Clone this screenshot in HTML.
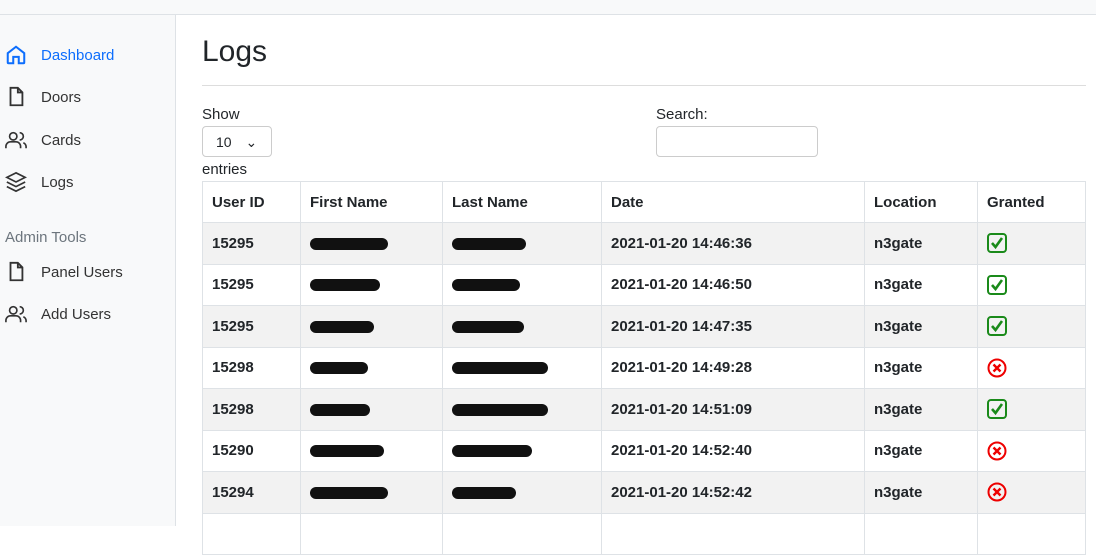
<!DOCTYPE html>
<html><head><style>
body{margin:0;width:1096px;height:526px;overflow:hidden;font-family:"Liberation Sans",sans-serif;background:#fff;color:#212529;position:relative}
.top{position:absolute;left:0;top:0;width:1096px;height:14px;background:#f8f9fa;border-bottom:1px solid #dee2e6}
.side{position:absolute;left:0;top:15px;width:175px;height:511px;background:#f8f9fa;border-right:1px solid #dee2e6}
.nav{position:absolute;left:5px;font-size:15px;color:#333;display:flex;align-items:center}
.nav svg{width:22px;height:22px;margin-right:14px}
.nav.a{color:#0d6efd}
h1{position:absolute;left:202px;top:35px;margin:0;font-weight:400;font-size:30px}
.hr{position:absolute;left:202px;top:85px;width:884px;border-top:1px solid #ddd}
.t{position:absolute;font-size:15px}
table{position:absolute;left:202px;top:181px;border-collapse:collapse;width:884px;font-size:15px;font-weight:bold}
td{border:1px solid #dee2e6;height:41.5px;padding:0 0 0 9px;box-sizing:border-box}
tr:first-child td{height:41px}
tr:nth-child(even) td{background:#f2f2f2}
.s{display:inline-block;background:#111;border-radius:10px;height:12px;vertical-align:middle}
svg.i{width:20px;height:20px;vertical-align:middle}
</style></head><body>
<div class="top"></div>
<div class="side">
<div class="nav a" style="top:29px"><svg viewBox="0 0 24 24" fill="none" stroke="#0d6efd" stroke-width="2.2"><path d="M3 10 12 3l9 7v10a1 1 0 0 1-1 1h-5v-7H9v7H4a1 1 0 0 1-1-1z"/></svg>Dashboard</div>
<div class="nav" style="top:71px"><svg viewBox="0 0 24 24" fill="none" stroke="#333" stroke-width="2"><path d="M6 2h8l5 5v14H6zM14 2v5h5"/></svg>Doors</div>
<div class="nav" style="top:114px"><svg viewBox="0 0 24 24" fill="none" stroke="#333" stroke-width="1.8"><circle cx="9" cy="8" r="4"/><path d="M1 21v-2a5 5 0 0 1 5-5h6a5 5 0 0 1 5 5v2M16 4a4 4 0 0 1 0 8M23 21v-2a5 5 0 0 0-3-4"/></svg>Cards</div>
<div class="nav" style="top:156px"><svg viewBox="0 0 24 24" fill="none" stroke="#333" stroke-width="1.8"><path d="M12 2 2 7l10 5 10-5zM2 17l10 5 10-5M2 12l10 5 10-5"/></svg>Logs</div>
<div style="position:absolute;left:5px;top:214px;font-size:15px;color:#6c757d">Admin Tools</div>
<div class="nav" style="top:246px"><svg viewBox="0 0 24 24" fill="none" stroke="#333" stroke-width="2"><path d="M6 2h8l5 5v14H6zM14 2v5h5"/></svg>Panel Users</div>
<div class="nav" style="top:288px"><svg viewBox="0 0 24 24" fill="none" stroke="#333" stroke-width="1.8"><circle cx="9" cy="8" r="4"/><path d="M1 21v-2a5 5 0 0 1 5-5h6a5 5 0 0 1 5 5v2M16 4a4 4 0 0 1 0 8M23 21v-2a5 5 0 0 0-3-4"/></svg>Add Users</div>
</div>
<h1>Logs</h1>
<div class="hr"></div>
<div class="t" style="left:202px;top:106px">Show</div>
<div style="position:absolute;left:202px;top:126px;width:70px;height:31px;border:1px solid #ccc;border-radius:4px;font-size:14px;line-height:31px;padding-left:13px;box-sizing:border-box">10 <span style="margin-left:10px">&#8964;</span></div>
<div class="t" style="left:202px;top:161px">entries</div>
<div class="t" style="left:656px;top:106px">Search:</div>
<div style="position:absolute;left:656px;top:126px;width:162px;height:31px;border:1px solid #ccc;border-radius:4px;box-sizing:border-box"></div>
<svg width="0" height="0" style="position:absolute"><defs>
<symbol id="ok" viewBox="0 0 20 20"><rect x="1" y="1" width="18" height="18" rx="3" fill="none" stroke="#1a8a1a" stroke-width="2"/><path d="M5 10l3.5 4L15 5" fill="none" stroke="#1a8a1a" stroke-width="2.6"/></symbol>
<symbol id="no" viewBox="0 0 20 20"><circle cx="10" cy="10" r="8.5" fill="none" stroke="#e00" stroke-width="2"/><path d="M6.5 6.5l7 7M13.5 6.5l-7 7" stroke="#e00" stroke-width="2.4"/></symbol>
</defs></svg>
<table>
<tr><td style="width:98px">User ID</td><td style="width:142px">First Name</td><td style="width:159px">Last Name</td><td style="width:263px">Date</td><td style="width:113px">Location</td><td>Granted</td></tr>
<tr><td>15295</td><td><span class="s" style="width:78px"></span></td><td><span class="s" style="width:74px"></span></td><td>2021-01-20 14:46:36</td><td>n3gate</td><td><svg class="i"><use href="#ok"/></svg></td></tr>
<tr><td>15295</td><td><span class="s" style="width:70px"></span></td><td><span class="s" style="width:68px"></span></td><td>2021-01-20 14:46:50</td><td>n3gate</td><td><svg class="i"><use href="#ok"/></svg></td></tr>
<tr><td>15295</td><td><span class="s" style="width:64px"></span></td><td><span class="s" style="width:72px"></span></td><td>2021-01-20 14:47:35</td><td>n3gate</td><td><svg class="i"><use href="#ok"/></svg></td></tr>
<tr><td>15298</td><td><span class="s" style="width:58px"></span></td><td><span class="s" style="width:96px"></span></td><td>2021-01-20 14:49:28</td><td>n3gate</td><td><svg class="i"><use href="#no"/></svg></td></tr>
<tr><td>15298</td><td><span class="s" style="width:60px"></span></td><td><span class="s" style="width:96px"></span></td><td>2021-01-20 14:51:09</td><td>n3gate</td><td><svg class="i"><use href="#ok"/></svg></td></tr>
<tr><td>15290</td><td><span class="s" style="width:74px"></span></td><td><span class="s" style="width:80px"></span></td><td>2021-01-20 14:52:40</td><td>n3gate</td><td><svg class="i"><use href="#no"/></svg></td></tr>
<tr><td>15294</td><td><span class="s" style="width:78px"></span></td><td><span class="s" style="width:64px"></span></td><td>2021-01-20 14:52:42</td><td>n3gate</td><td><svg class="i"><use href="#no"/></svg></td></tr>
<tr><td></td><td></td><td></td><td></td><td></td><td></td></tr>
</table>
</body></html>
